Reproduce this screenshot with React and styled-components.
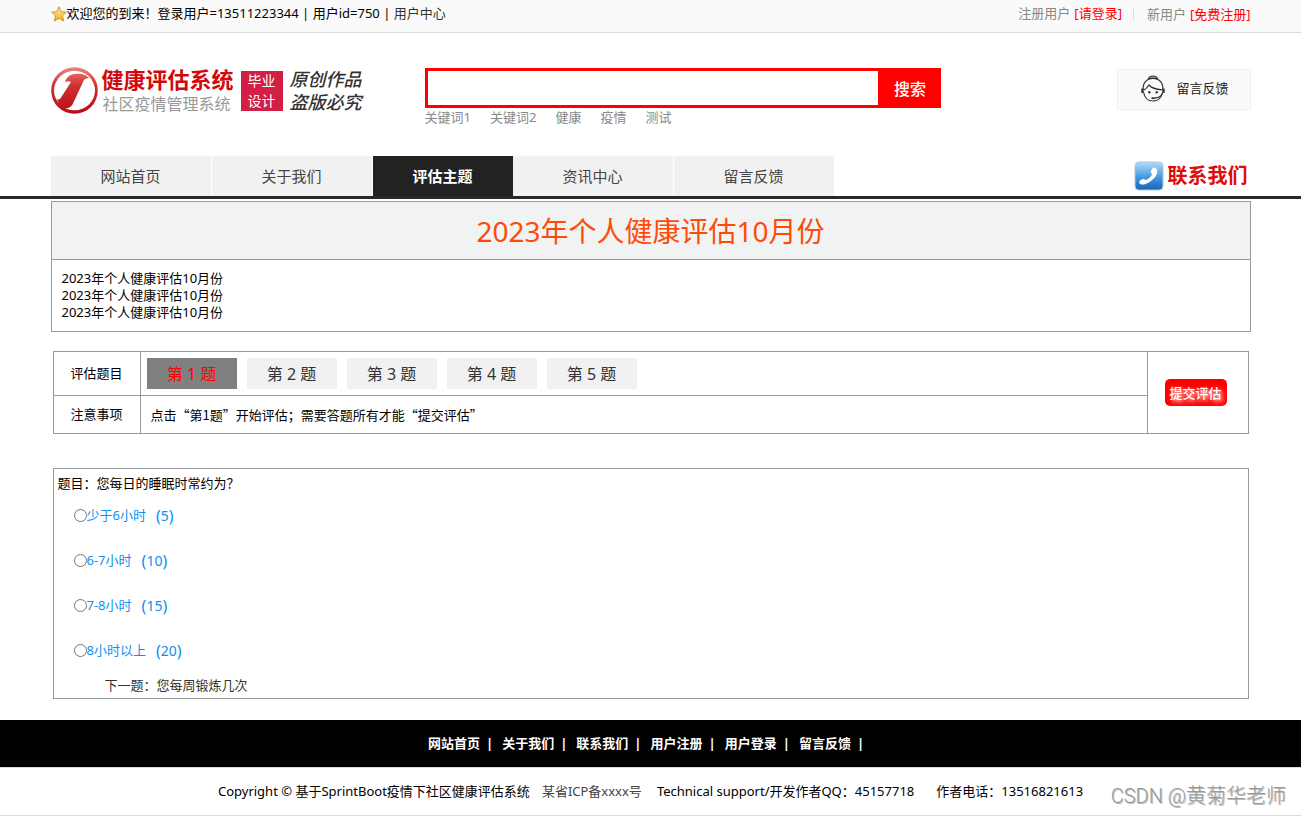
import { useState } from 'react'
import styled, { createGlobalStyle } from 'styled-components'

const GlobalStyle = createGlobalStyle`
  * {
    box-sizing: border-box;
  }
  body {
    margin: 0;
    background: #fff;
    color: #000;
    font-family: "Noto Sans", "Noto Sans CJK SC", sans-serif;
    font-size: 13px;
    line-height: 17px;
  }
  a {
    color: inherit;
    text-decoration: none;
  }
  button, input {
    font-family: inherit;
  }
`

const Container = styled.div`
  width: 100%;
  max-width: 1200px;
  margin: 0 auto;
`

const TopBar = styled.div`
  background: #fafafa;
  border-bottom: 1px solid #dcdcdc;
`

const TopBarInner = styled(Container)`
  display: flex;
  justify-content: space-between;
  height: 32px;
  padding-bottom: 5px;
  align-items: center;
`

const Welcome = styled.div`
  display: flex;
  align-items: center;
  white-space: pre;

  a {
    color: #333;
  }
`

const Account = styled.div`
  display: flex;
  align-items: center;
  color: #888;
`

const AccountItem = styled.span`
  display: flex;
  gap: 4px;

  & + & {
    margin-left: 11px;
    padding-left: 13px;
    border-left: 1px solid #ddd;
    line-height: 14px;
  }

  a {
    color: #f00;
  }
`

const Header = styled(Container)`
  display: flex;
  align-items: flex-start;
  padding-top: 34px;
  height: 123px;
`

const Logo = styled.a`
  display: flex;
  align-items: center;
`

const LogoMark = styled.svg`
  width: 47px;
  height: 47px;
  margin-right: 4px;
`

const LogoName = styled.div`
  color: #d3080c;
  font-size: 22px;
  font-weight: 700;
  line-height: 25px;
`

const LogoSub = styled.div`
  color: #999;
  font-size: 16px;
  line-height: 22px;
  padding: 1px 0 0 1px;
  margin-bottom: -1px;
`

const Stamp = styled.div`
  width: 42px;
  height: 40px;
  margin: 0 7px;
  background: #d11f45;
  color: #fff;
  font-size: 14px;
  line-height: 20px;
  text-align: center;
`

const Slogan = styled.div`
  display: flex;
  flex-direction: column;
  width: 77px;
  color: #333;
  font-size: 18px;
  font-style: italic;
  font-weight: 500;
  line-height: 23px;
`

const Search = styled.div`
  width: 516px;
  margin: 1px 0 0 58px;
`

const SearchForm = styled.form`
  display: flex;
  height: 40px;
`

const SearchInput = styled.input`
  flex: 1;
  min-width: 0;
  border: 3px solid #f00;
  border-right: 0;
  padding: 0 8px;
  font-size: 14px;
  outline: none;
`

const SearchButton = styled.button`
  width: 63px;
  border: 0;
  padding: 2px 0 0 2px;
  background: #f00;
  color: #fff;
  font-size: 16px;
  font-weight: 500;
  line-height: 20px;
`

const Keywords = styled.div`
  display: flex;
  gap: 19px;
  color: #888;
  line-height: 18px;
`

const Feedback = styled.a`
  display: flex;
  align-items: center;
  gap: 12px;
  width: 134px;
  height: 41px;
  margin: 2px 0 0 auto;
  padding: 0 0 2px 23px;
  background: #fafafa;
  border: 1px solid #f0f0f0;
  color: #222;
`

const NavBar = styled.div`
  border-bottom: 3px solid #2a2828;
`

const NavInner = styled(Container)`
  display: flex;
  align-items: center;
  justify-content: space-between;
  height: 40px;
`

const Nav = styled.nav`
  display: flex;
`

const NavLink = styled.a`
  padding: 0 ${({ $active }) => ($active ? 40 : 50)}px;
  border-right: ${({ $active }) => ($active ? 0 : 1)}px solid #fff;
  background: ${({ $active }) => ($active ? '#222' : '#f1f1f1')};
  color: ${({ $active }) => ($active ? '#fff' : '#444')};
  font-size: 15px;
  font-weight: ${({ $active }) => ($active ? 700 : 400)};
  line-height: 40px;
`

const Contact = styled.a`
  display: flex;
  align-items: center;
  gap: 4px;
  padding-right: 3px;
  color: #e00b0b;
  font-size: 20px;
  font-weight: 700;
  line-height: 30px;
`

const Intro = styled.section`
  margin-top: 2px;
  border: 1px solid #999;
`

const IntroTitle = styled.h1`
  margin: 0;
  padding-top: 1px;
  background: #f1f3f3;
  border-bottom: 1px solid #999;
  color: #ff4a0a;
  font-size: 28px;
  font-weight: 400;
  line-height: 56px;
  text-align: center;
`

const IntroText = styled.div`
  padding: 10px;
`

const IntroLine = styled.p`
  margin: 0;
`

const Inset = styled.div`
  padding: 0 2px;
`

const Guide = styled.table`
  width: 100%;
  margin-top: 19px;
  border-collapse: collapse;

  th, td {
    border: 1px solid #999;
    padding: 0;
    font-weight: 400;
  }
  th {
    width: 87px;
  }
`

const TopicRow = styled.tr`
  height: 44px;
`

const NoteRow = styled.tr`
  height: 38px;
`

const NoteCell = styled.td`
  font-family: "Noto Sans CJK SC", sans-serif;

  && {
    padding-left: 10px;
  }
`

const SubmitCell = styled.td`
  width: 101px;
  text-align: center;

  && {
    padding-right: 4px;
  }
`

const Tabs = styled.div`
  display: flex;
  gap: 10px;
  padding-left: 6px;
`

const Tab = styled.button`
  min-width: 90px;
  height: 31px;
  border: 0;
  padding: 1px 0 0;
  background: ${({ $active }) => ($active ? '#808080' : '#f1f1f1')};
  color: ${({ $active }) => ($active ? '#f00' : '#333')};
  font-size: 16px;
  line-height: 30px;
`

const Submit = styled.button`
  width: 62px;
  height: 27px;
  border: 0;
  border-radius: 5px;
  padding: 0;
  background: #f00;
  color: #fff;
  font-size: 13px;
  font-weight: 500;
  text-shadow: 2px 2px 4px #fff;
`

const Question = styled.fieldset`
  margin: 34px 0 0;
  padding: 6px 4px 4px;
  border: 1px solid #999;
`

const QuestionTitle = styled.legend`
  float: left;
  width: 100%;
  padding: 0;
`

const Options = styled.div`
  clear: both;
  padding: 15px 0 0 16px;
`

const Option = styled.label`
  display: flex;
  align-items: center;
  height: 17px;
  margin-bottom: 28px;
  color: #0e90f0;

  &:last-child {
    margin-bottom: 0;
  }
  input {
    width: 13px;
    height: 13px;
    margin: 0;
  }
`

const Score = styled.span`
  display: flex;
  align-items: center;
  margin-left: 10px;
  font-size: 14px;
`

const Paren = styled.span`
  font-size: 16px;
  line-height: 20px;
`

const NextQuestion = styled.a`
  display: block;
  padding: 18px 0 0 47px;
  color: #333;
`

const FooterNav = styled.nav`
  display: flex;
  justify-content: center;
  margin-top: 21px;
  background: #000;
  border-bottom: 1px solid #dcdcdc;
  color: #fff;
  font-weight: 700;
  line-height: 47px;
`

const FooterLink = styled.a`
  &::after {
    content: "|";
    padding: 0 9px 0 6px;
  }
`

const Copyright = styled.footer`
  position: relative;
  display: flex;
  justify-content: center;
  border-bottom: 1px solid #dcdcdc;
  line-height: 47px;

  span, a {
    white-space: nowrap;
  }
`

const Icp = styled.a`
  margin: 0 15px 0 12px;
  color: #444;
`

const Phone = styled.span`
  margin-left: 22px;
`

const Watermark = styled.div`
  position: absolute;
  right: 15px;
  top: 15px;
  color: #999;
  font-family: Roboto, "Noto Sans CJK SC", sans-serif;
  font-size: 20px;
  font-weight: 300;
  line-height: 26px;
  text-shadow: 1px 1px 0 #bbb;
`

const StarIcon = () => (
  <svg width="16" height="16" viewBox="0 0 16 16">
    <defs>
      <linearGradient id="star" x1="0" y1="0" x2="0" y2="1">
        <stop offset="0" stopColor="#fff3a0" />
        <stop offset="1" stopColor="#f5ae1c" />
      </linearGradient>
    </defs>
    <path d="M8 .8l2.1 4.9 5.3.5-4 3.5 1.2 5.3L8 12.2 3.400 15l1.200-5.300-4-3.500 5.300-.5z" fill="url(#star)" stroke="#c58a28" strokeWidth=".9" strokeLinejoin="round" />
  </svg>
)

const LogoIcon = () => (
  <LogoMark viewBox="0 0 47 47">
    <defs>
      <linearGradient id="mark" gradientUnits="userSpaceOnUse" x1="0" y1="0" x2="0" y2="47">
        <stop offset="0" stopColor="#ea8580" />
        <stop offset=".4" stopColor="#d23030" />
        <stop offset="1" stopColor="#b80c12" />
      </linearGradient>
    </defs>
    <circle cx="23.500" cy="23.500" r="23.300" fill="url(#mark)" />
    <ellipse cx="23.500" cy="23.500" rx="20.500" ry="19.800" fill="#fff" />
    <path d="M14 15.500C15.500 9.500 20 6.800 26 6.800c5 0 8 .2 12.500 4.700-3-.8-4.500-.3-6 2.500L22 36.500c-2 4.500-7 6.500-13 3L6 32c1.500 1 3 .3 4-1.500l10-15.500c-2-1.300-4-1-6 .5z" fill="url(#mark)" />
  </LogoMark>
)

const ServiceIcon = () => (
  <svg width="24" height="27" viewBox="0 0 24 27" fill="none" stroke="#333" strokeWidth="1.200">
    <path d="M7.500 3.800C8 1.800 9.700 1 12 1s4 .8 4.500 2.800c-3-1-6-1-9 0z" fill="#bbb" />
    <path d="M2.200 15C1.500 8 5.500 3.500 12 3.500S22.500 8 21.800 15" />
    <path d="M2.600 17.500C3.500 22.500 7 26 12 26s8.500-3.500 9.400-8.500" />
    <path d="M3 15c2.500-1.500 4-3.500 5-5 2.500 3 6.500 4.300 13 4.800" />
    <path d="M1.500 13.500v4.500M22.500 13.500v4.500" strokeWidth="2.400" />
    <path d="M21.500 18.500c-1.500 3-4 4.300-7.500 4.500" />
    <path d="M10.500 22.800c1.500.8 3 .6 4-.3" strokeWidth="1.600" />
    <circle cx="8.300" cy="17.200" r="1.200" fill="#333" stroke="none" />
    <circle cx="15.700" cy="17.200" r="1.200" fill="#333" stroke="none" />
  </svg>
)

const PhoneIcon = () => (
  <svg width="30" height="30" viewBox="0 0 30 30">
    <defs>
      <linearGradient id="phone" x1="0" y1="0" x2="0" y2="1">
        <stop offset="0" stopColor="#b4dcf6" />
        <stop offset=".5" stopColor="#4a9fe0" />
        <stop offset="1" stopColor="#1565b8" />
      </linearGradient>
    </defs>
    <rect x="1" y="1" width="28" height="28" rx="4" fill="url(#phone)" stroke="#a8c8e6" />
    <path d="M18.500 7.500c1-1.200 2.800-1.200 4 .2 1.600 2 .9 5.800-2 9-3.300 3.700-8.500 7-12.500 6.800-1.800-.2-3.200-1.700-2.700-3 .7-1.300 3.200-2.800 4.700-2.500.9.200.9 1.100 1.800 1 2-.2 5.700-3.700 6.200-5.700.1-.9-1-.9-1.100-1.900-.1-1.300.7-2.900 1.600-3.900z" fill="#fff" />
  </svg>
)

const navItems = ['网站首页', '关于我们', '评估主题', '资讯中心', '留言反馈']
const keywords = ['关键词1', '关键词2', '健康', '疫情', '测试']
const footerItems = ['网站首页', '关于我们', '联系我们', '用户注册', '用户登录', '留言反馈']
const options = [
  { label: '少于6小时', score: 5 },
  { label: '6-7小时', score: 10 },
  { label: '7-8小时', score: 15 },
  { label: '8小时以上', score: 20 }
]

const App = () => {
  const [current, setCurrent] = useState(1)
  const [answer, setAnswer] = useState(null)

  return (
    <>
      <GlobalStyle />
      <TopBar>
        <TopBarInner>
          <Welcome>
            <StarIcon />
            <span>欢迎您的到来！登录用户=13511223344 | 用户id=750 | </span>
            <a href="#user">用户中心</a>
          </Welcome>
          <Account>
            <AccountItem>注册用户 <a href="#login">[请登录]</a></AccountItem>
            <AccountItem>新用户 <a href="#register">[免费注册]</a></AccountItem>
          </Account>
        </TopBarInner>
      </TopBar>

      <Header as="header">
        <Logo href="#home">
          <LogoIcon />
          <div>
            <LogoName>健康评估系统</LogoName>
            <LogoSub>社区疫情管理系统</LogoSub>
          </div>
          <Stamp>毕业<br />设计</Stamp>
          <Slogan>
            <span>原创作品</span>
            <span>盗版必究</span>
          </Slogan>
        </Logo>
        <Search>
          <SearchForm onSubmit={e => e.preventDefault()}>
            <SearchInput type="text" aria-label="搜索" />
            <SearchButton type="submit">搜索</SearchButton>
          </SearchForm>
          <Keywords>
            {keywords.map(word => <a key={word} href="#search">{word}</a>)}
          </Keywords>
        </Search>
        <Feedback href="#feedback">
          <ServiceIcon />
          留言反馈
        </Feedback>
      </Header>

      <NavBar>
        <NavInner>
          <Nav>
            {navItems.map(item => (
              <NavLink key={item} href="#nav" $active={item === '评估主题'}>{item}</NavLink>
            ))}
          </Nav>
          <Contact href="#contact">
            <PhoneIcon />
            联系我们
          </Contact>
        </NavInner>
      </NavBar>

      <Container as="main">
        <Intro>
          <IntroTitle>2023年个人健康评估10月份</IntroTitle>
          <IntroText>
            {[1, 2, 3].map(line => <IntroLine key={line}>2023年个人健康评估10月份</IntroLine>)}
          </IntroText>
        </Intro>

        <Inset>
          <Guide>
            <tbody>
              <TopicRow>
                <th scope="row">评估题目</th>
                <td>
                  <Tabs>
                    {[1, 2, 3, 4, 5].map(n => (
                      <Tab key={n} type="button" $active={n === current} onClick={() => setCurrent(n)}>
                        {`第 ${n} 题`}
                      </Tab>
                    ))}
                  </Tabs>
                </td>
                <SubmitCell rowSpan={2}>
                  <Submit type="button">提交评估</Submit>
                </SubmitCell>
              </TopicRow>
              <NoteRow>
                <th scope="row">注意事项</th>
                <NoteCell>点击“第1题”开始评估；需要答题所有才能“提交评估”</NoteCell>
              </NoteRow>
            </tbody>
          </Guide>

          <Question>
            <QuestionTitle>题目：您每日的睡眠时常约为？</QuestionTitle>
            <Options>
              {options.map(({ label, score }) => (
                <Option key={score}>
                  <input type="radio" name="answer" checked={answer === score} onChange={() => setAnswer(score)} />
                  {label}
                  <Score><Paren>(</Paren>{score}<Paren>)</Paren></Score>
                </Option>
              ))}
            </Options>
            <NextQuestion href="#next">下一题：您每周锻炼几次</NextQuestion>
          </Question>
        </Inset>
      </Container>

      <FooterNav>
        {footerItems.map(item => <FooterLink key={item} href="#footer">{item}</FooterLink>)}
      </FooterNav>
      <Copyright>
        <span>Copyright © 基于SprintBoot疫情下社区健康评估系统</span>
        <Icp href="#icp">某省ICP备xxxx号</Icp>
        <span>Technical support/开发作者QQ：45157718</span>
        <Phone>作者电话：13516821613</Phone>
        <Watermark>CSDN @黄菊华老师</Watermark>
      </Copyright>
    </>
  )
}

export default App
